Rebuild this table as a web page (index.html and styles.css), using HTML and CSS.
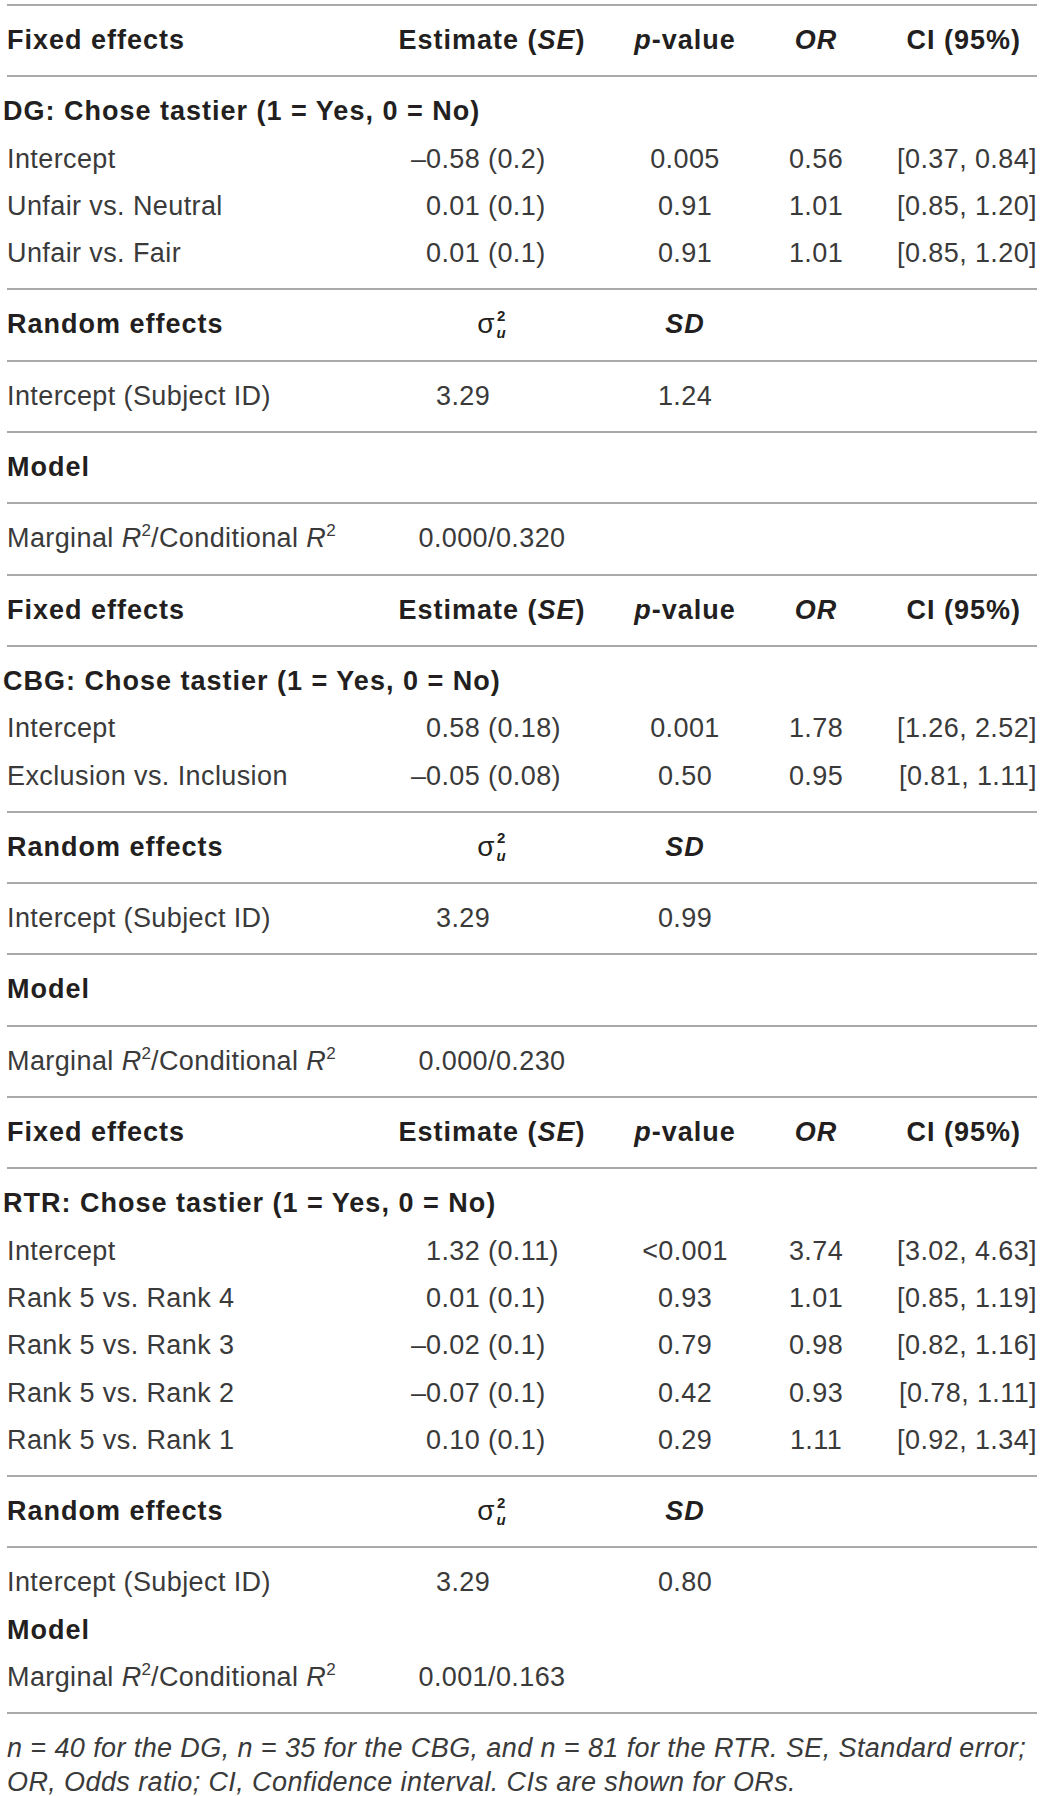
FILE: index.html
```html
<!DOCTYPE html>
<html lang="en">
<head>
<meta charset="utf-8">
<title>Mixed model results</title>
<link rel="stylesheet" href="styles.css">
</head>
<body>
<div class="table">
  <div class="group">
    <div class="row head">
      <div class="lab">Fixed effects</div>
      <div class="est">Estimate (<i>SE</i>)</div>
      <div class="pv"><i>p</i>-value</div>
      <div class="or"><i>OR</i></div>
      <div class="ci ci-h">CI (95%)</div>
    </div>
  </div>
  <div class="group">
    <div class="row title"><div class="full">DG: Chose tastier (1 = Yes, 0 = No)</div></div>
    <div class="row"><div class="lab">Intercept</div><div class="est val"><span class="neg">–</span>0.58 (0.2)</div><div class="pv">0.005</div><div class="or">0.56</div><div class="ci">[0.37, 0.84]</div></div>
    <div class="row"><div class="lab">Unfair vs. Neutral</div><div class="est val">0.01 (0.1)</div><div class="pv">0.91</div><div class="or">1.01</div><div class="ci">[0.85, 1.20]</div></div>
    <div class="row"><div class="lab">Unfair vs. Fair</div><div class="est val">0.01 (0.1)</div><div class="pv">0.91</div><div class="or">1.01</div><div class="ci">[0.85, 1.20]</div></div>
  </div>
  <div class="group">
    <div class="row head">
      <div class="lab">Random effects</div>
      <div class="est"><span class="sig">σ<span class="stack"><span class="sup">2</span><span class="sub">u</span></span></span></div>
      <div class="pv"><i>SD</i></div>
      <div class="or"></div>
      <div class="ci"></div>
    </div>
  </div>
  <div class="group">
    <div class="row"><div class="lab">Intercept (Subject ID)</div><div class="est var">3.29</div><div class="pv">1.24</div><div class="or"></div><div class="ci"></div></div>
  </div>
  <div class="group">
    <div class="row head"><div class="lab">Model</div></div>
  </div>
  <div class="group">
    <div class="row"><div class="lab">Marginal <i>R</i><sup>2</sup>/Conditional <i>R</i><sup>2</sup></div><div class="est">0.000/0.320</div><div class="pv"></div><div class="or"></div><div class="ci"></div></div>
  </div>

  <div class="group">
    <div class="row head">
      <div class="lab">Fixed effects</div>
      <div class="est">Estimate (<i>SE</i>)</div>
      <div class="pv"><i>p</i>-value</div>
      <div class="or"><i>OR</i></div>
      <div class="ci ci-h">CI (95%)</div>
    </div>
  </div>
  <div class="group">
    <div class="row title"><div class="full">CBG: Chose tastier (1 = Yes, 0 = No)</div></div>
    <div class="row"><div class="lab">Intercept</div><div class="est val">0.58 (0.18)</div><div class="pv">0.001</div><div class="or">1.78</div><div class="ci">[1.26, 2.52]</div></div>
    <div class="row"><div class="lab">Exclusion vs. Inclusion</div><div class="est val"><span class="neg">–</span>0.05 (0.08)</div><div class="pv">0.50</div><div class="or">0.95</div><div class="ci">[0.81, 1.11]</div></div>
  </div>
  <div class="group">
    <div class="row head">
      <div class="lab">Random effects</div>
      <div class="est"><span class="sig">σ<span class="stack"><span class="sup">2</span><span class="sub">u</span></span></span></div>
      <div class="pv"><i>SD</i></div>
      <div class="or"></div>
      <div class="ci"></div>
    </div>
  </div>
  <div class="group">
    <div class="row"><div class="lab">Intercept (Subject ID)</div><div class="est var">3.29</div><div class="pv">0.99</div><div class="or"></div><div class="ci"></div></div>
  </div>
  <div class="group">
    <div class="row head"><div class="lab">Model</div></div>
  </div>
  <div class="group">
    <div class="row"><div class="lab">Marginal <i>R</i><sup>2</sup>/Conditional <i>R</i><sup>2</sup></div><div class="est">0.000/0.230</div><div class="pv"></div><div class="or"></div><div class="ci"></div></div>
  </div>

  <div class="group">
    <div class="row head">
      <div class="lab">Fixed effects</div>
      <div class="est">Estimate (<i>SE</i>)</div>
      <div class="pv"><i>p</i>-value</div>
      <div class="or"><i>OR</i></div>
      <div class="ci ci-h">CI (95%)</div>
    </div>
  </div>
  <div class="group">
    <div class="row title"><div class="full">RTR: Chose tastier (1 = Yes, 0 = No)</div></div>
    <div class="row"><div class="lab">Intercept</div><div class="est val">1.32 (0.11)</div><div class="pv">&lt;0.001</div><div class="or">3.74</div><div class="ci">[3.02, 4.63]</div></div>
    <div class="row"><div class="lab">Rank 5 vs. Rank 4</div><div class="est val">0.01 (0.1)</div><div class="pv">0.93</div><div class="or">1.01</div><div class="ci">[0.85, 1.19]</div></div>
    <div class="row"><div class="lab">Rank 5 vs. Rank 3</div><div class="est val"><span class="neg">–</span>0.02 (0.1)</div><div class="pv">0.79</div><div class="or">0.98</div><div class="ci">[0.82, 1.16]</div></div>
    <div class="row"><div class="lab">Rank 5 vs. Rank 2</div><div class="est val"><span class="neg">–</span>0.07 (0.1)</div><div class="pv">0.42</div><div class="or">0.93</div><div class="ci">[0.78, 1.11]</div></div>
    <div class="row"><div class="lab">Rank 5 vs. Rank 1</div><div class="est val">0.10 (0.1)</div><div class="pv">0.29</div><div class="or">1.11</div><div class="ci">[0.92, 1.34]</div></div>
  </div>
  <div class="group">
    <div class="row head">
      <div class="lab">Random effects</div>
      <div class="est"><span class="sig">σ<span class="stack"><span class="sup">2</span><span class="sub">u</span></span></span></div>
      <div class="pv"><i>SD</i></div>
      <div class="or"></div>
      <div class="ci"></div>
    </div>
  </div>
  <div class="group">
    <div class="row"><div class="lab">Intercept (Subject ID)</div><div class="est var">3.29</div><div class="pv">0.80</div><div class="or"></div><div class="ci"></div></div>
    <div class="row head"><div class="lab">Model</div></div>
    <div class="row"><div class="lab">Marginal <i>R</i><sup>2</sup>/Conditional <i>R</i><sup>2</sup></div><div class="est">0.001/0.163</div><div class="pv"></div><div class="or"></div><div class="ci"></div></div>
  </div>
</div>
<p class="note"><i>n</i> = 40 for the DG, <i>n</i> = 35 for the CBG, and <i>n</i> = 81 for the RTR. SE, Standard error;<br>OR, Odds ratio; CI, Confidence interval. CIs are shown for ORs.</p>
</body>
</html>
```
FILE: styles.css
```css
html, body {
  margin: 0;
  padding: 0;
  background: #ffffff;
}

body {
  font-family: "Liberation Sans", Arial, Helvetica, sans-serif;
  color: #3a3a3a;
}

.table {
  margin: 4px 0 0 7px;
  width: 1030px;
  border-top: 2px solid #a9a9a9;
}

.group {
  padding: 11px 0;
  border-bottom: 2px solid #a9a9a9;
}

.row {
  display: grid;
  grid-template-columns: 389px 192px 194px 68px 187px;
  font-size: 27px;
  line-height: 47.3px;
  height: 47.3px;
  letter-spacing: 0.4px;
  white-space: nowrap;
}

.row i {
  font-style: italic;
}

.head,
.title {
  font-weight: bold;
  color: #231f20;
  letter-spacing: 1px;
}

.title .full {
  grid-column: 1 / -1;
  margin-left: -4px;
}

.lab {
  text-align: left;
}

.est,
.pv,
.or {
  text-align: center;
}

.est.val {
  text-align: left;
  padding-left: 30px;
}

.est.var {
  text-align: left;
  padding-left: 40px;
}

.neg {
  display: inline-block;
  width: 20px;
  margin-left: -20px;
  text-align: right;
  letter-spacing: 0;
}

.ci {
  text-align: right;
}

.ci-h {
  padding-right: 16px;
}

sup {
  font-size: 17px;
  line-height: 0;
  vertical-align: 11px;
  letter-spacing: 0;
}

.sig {
  font-weight: normal;
  color: #231f20;
  display: inline-flex;
  align-items: center;
  line-height: 1;
  font-size: 28px;
}

.stack {
  display: inline-flex;
  flex-direction: column;
  align-items: center;
  margin-left: 1px;
  font-weight: bold;
  font-size: 15px;
  line-height: 17.4px;
}

.stack .sub {
  font-style: italic;
}

.note {
  margin: 0 0 0 7px;
  padding-top: 17px;
  font-size: 27px;
  line-height: 34px;
  font-style: italic;
  letter-spacing: 0.4px;
  white-space: nowrap;
  color: #3a3a3a;
}
```
